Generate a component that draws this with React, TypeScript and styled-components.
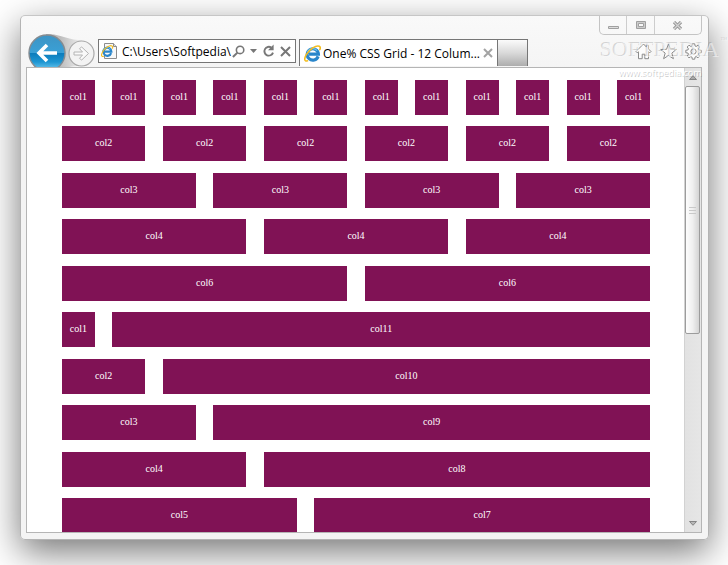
import React from "react";
import styled, { createGlobalStyle } from "styled-components";

const GlobalStyle = createGlobalStyle`
  * { box-sizing: border-box; }
  body { margin: 0; background: #fff; font-family: "Open Sans", "Noto Sans", sans-serif; font-size: 12px; color: #000; }
  button { border: 0; padding: 0; background: none; font: inherit; display: flex; align-items: center; justify-content: center; }
  svg { display: block; flex: none; }
`;

const Desktop = styled.div`
  position: relative;
  height: 100vh;
  padding: 15px 19px 25px 20px;
  overflow: hidden;
  display: flex;
`;

const Window = styled.div`
  flex: 1;
  min-width: 0;
  display: flex;
  flex-direction: column;
  padding: 0 6px 6px 5px;
  border: 1px solid #b4b4b4;
  border-top-color: #c6c6c6;
  border-radius: 5px;
  background: linear-gradient(#f9f9f9, #f4f4f4 60px);
  box-shadow: 0 12px 36px rgba(0, 0, 0, 0.54);
`;

const Toolbar = styled.header`
  display: flex;
  align-items: flex-start;
  height: 51px;
  overflow: hidden;
`;

const Nav = styled.nav`
  position: relative;
  flex: none;
  display: flex;
  align-items: center;
  gap: 2px;
  width: 72px;
  margin-top: 18px;
  padding-left: 2px;
`;

const Swoosh = styled.svg`
  position: absolute;
  left: 0;
  top: 0;
`;

const RoundButton = styled.button`
  position: relative;
`;

const AddressBar = styled.form`
  flex: 0 1 198px;
  min-width: 0;
  height: 24px;
  margin: 23px 3px 0 0;
  padding: 0 4px 0 2px;
  display: flex;
  align-items: center;
  border: 1px solid #767676;
  background: #fff;
`;

const AddressInput = styled.input`
  flex: 1;
  min-width: 0;
  height: 20px;
  margin-left: 4px;
  padding: 0;
  border: 0;
  outline: 0;
  background: transparent;
  color: #000;
  font: 12px "Open Sans", "Noto Sans", sans-serif;
`;

const AddressTools = styled.div`
  display: flex;
  align-items: center;
  gap: 5px;
`;

const Tabs = styled.div`
  flex: 0 1 229px;
  min-width: 0;
  display: flex;
  height: 27px;
  margin-top: 23px;
`;

const Tab = styled.div`
  flex: 1;
  min-width: 0;
  display: flex;
  align-items: center;
  gap: 2px;
  padding: 0 4px;
  border: 1px solid #767676;
  border-bottom: 0;
  background: #fff;
`;

const TabTitle = styled.span`
  flex: 1;
  white-space: nowrap;
`;

const NewTab = styled.button`
  && {
    width: 30px;
    border: 1px solid #767676;
    border-left: 0;
    border-bottom: 0;
    background: linear-gradient(#fbfbfb, #d9d9d9 50%, #adadad);
  }
`;

const WindowTools = styled.div`
  flex: none;
  width: 103px;
  margin-left: auto;
`;

const Caption = styled.div`
  display: flex;
  height: 19px;
  border: 1px solid #c4c4c4;
  border-top: 0;
  border-radius: 0 0 5px 5px;
`;

const CaptionButton = styled.button<{ $wide?: boolean }>`
  flex: ${(p) => (p.$wide ? 47 : 27)};
  & + & { border-left: 1px solid #cdcdcd; }
`;

const Commands = styled.div`
  display: flex;
  justify-content: flex-end;
  gap: 8px;
  margin-top: 8px;
`;

const Viewport = styled.div`
  flex: 1;
  min-height: 0;
  display: flex;
  border: 1px solid #b5b5b5;
  background: #fff;
`;

const Page = styled.main`
  flex: 1;
  min-width: 0;
  padding: 12px 34px 0 35px;
  overflow: hidden;
  font-family: "Liberation Serif", serif;
  font-size: 10px;
`;

const Row = styled.div`
  display: grid;
  grid-template-columns: repeat(12, minmax(0, 1fr));
  column-gap: 3%;
  margin-bottom: 1.95%;
`;

const Col = styled.div<{ $span: number }>`
  grid-column: span ${(p) => p.$span};
  padding-bottom: 2px;
  background: #801255;
  color: #fff;
  line-height: 33px;
  text-align: center;
`;

const Scrollbar = styled.div`
  flex: none;
  width: 17px;
  display: flex;
  flex-direction: column;
  background: linear-gradient(90deg, #d2d2d2 1px, #e2e2e2 1px, #e6e6e6);
`;

const ScrollArrow = styled.button`
  flex: none;
  height: 18px;
`;

const Track = styled.div`
  flex: 1;
  min-height: 0;
`;

const Thumb = styled.div`
  height: 58%;
  margin: 0 1px;
  display: flex;
  align-items: center;
  justify-content: center;
  border: 1px solid #9c9c9c;
  border-radius: 2px;
  background: linear-gradient(90deg, #fdfdfd, #f0f0f0 50%, #d4d4d4);
`;

const Watermark = styled.div`
  position: absolute;
  top: 37px;
  right: 0;
  display: grid;
  grid-template-columns: auto auto;
  column-gap: 2px;
  pointer-events: none;
  color: rgba(250, 250, 250, 0.6);
  text-shadow: -1px -1px 0 rgba(120, 120, 120, 0.28);
  font: 22px/26px "Liberation Serif", serif;
  white-space: nowrap;
`;

const Trademark = styled.span`
  font-size: 7px;
  line-height: 8px;
`;

const WatermarkUrl = styled.span`
  margin-left: 18px;
  color: #fff;
  text-shadow: 1px 1px 0 rgba(120, 120, 120, 0.4);
  font: 9px/20px "Open Sans", sans-serif;
`;

const IeMark = () => (
  <>
    <path d="M13.3 10.7A5.3 5.3 0 1 1 13.6 8.6H4.7" fill="none" stroke="#2a86cb" strokeWidth="2.9" />
    <path d="M12.3 5.3A5.3 5.3 0 0 0 3.2 7" fill="none" stroke="#69c2ef" strokeWidth="1.2" />
    <path d="M3.2 14.9C.2 15.9-.1 12.8 2.3 8.9 5.2 4.2 11.4-.2 14.4 1.2c1.1.6 1.1 1.9.5 3.2" fill="none" stroke="#f3bd21" strokeWidth="1.5" strokeLinecap="round" />
  </>
);

const IeIcon = () => (
  <svg width="17" height="17" viewBox="0 0 16 16" aria-hidden="true"><IeMark /></svg>
);

const PageIcon = () => (
  <svg width="17" height="17" viewBox="0 0 17 17" aria-hidden="true">
    <path d="M3.5 .5h9l3 3v12h-12z" fill="#f8f8f8" stroke="#8d8d8d" />
    <path d="M12.5 .5v3h3" fill="#ddd" stroke="#8d8d8d" />
    <g transform="translate(0 2) scale(.76)"><IeMark /></g>
  </svg>
);

const rows: number[][] = [
  [1, 1, 1, 1, 1, 1, 1, 1, 1, 1, 1, 1],
  [2, 2, 2, 2, 2, 2],
  [3, 3, 3, 3],
  [4, 4, 4],
  [6, 6],
  [1, 11],
  [2, 10],
  [3, 9],
  [4, 8],
  [5, 7],
];

export default function App() {
  return (
    <Desktop>
      <GlobalStyle />
      <Window>
        <Toolbar>
          <Nav aria-label="History">
            <Swoosh width="72" height="38" aria-hidden="true">
              <defs>
                <linearGradient id="swoosh" x1="0" x2="1">
                  <stop offset="0.4" stopColor="#bdbdbd" />
                  <stop offset="1" stopColor="#f0f0f0" />
                </linearGradient>
              </defs>
              <path d="M20 0C37 0 39 6 56 6V32C46 32 41 32 37 38H20z" fill="url(#swoosh)" />
            </Swoosh>
            <RoundButton type="button" aria-label="Back">
              <svg width="38" height="38" viewBox="0 0 38 38">
                <defs>
                  <linearGradient id="back" x1="0" y1="0" x2="0" y2="1">
                    <stop offset="0" stopColor="#3d94c4" />
                    <stop offset="0.49" stopColor="#3aa0d6" />
                    <stop offset="0.5" stopColor="#0b7bbb" />
                    <stop offset="0.75" stopColor="#1e96d2" />
                    <stop offset="1" stopColor="#7dd2f5" />
                  </linearGradient>
                </defs>
                <circle cx="19" cy="19" r="18" fill="url(#back)" stroke="#858b90" strokeWidth="1.4" />
                <path d="M29 19H11M19 11l-8 8 8 8" fill="none" stroke="#fff" strokeWidth="3.6" />
              </svg>
            </RoundButton>
            <RoundButton type="button" aria-label="Forward">
              <svg width="27" height="27" viewBox="0 0 27 27">
                <circle cx="13.5" cy="13.5" r="12.5" fill="#f3f3f3" stroke="#a9a9a9" strokeWidth="1.2" />
                <path d="M6 12h8.5l-3-3.4L13.7 7l6.8 6.5-6.8 6.5-2.2-1.6 3-3.4H6z" fill="#fafafa" stroke="#b4b4b4" />
              </svg>
            </RoundButton>
          </Nav>

          <AddressBar onSubmit={(e) => e.preventDefault()}>
            <PageIcon />
            <AddressInput aria-label="Address" defaultValue="C:\Users\Softpedia\" />
            <AddressTools>
              <button type="button" aria-label="Search">
                <svg width="13" height="13" viewBox="0 0 14 14" fill="none" stroke="#777">
                  <circle cx="8.7" cy="5.3" r="4" strokeWidth="1.7" />
                  <path d="M5.8 8.2L1 13" strokeWidth="2.2" />
                </svg>
              </button>
              <button type="button" aria-label="Show address list">
                <svg width="7" height="4" viewBox="0 0 7 4"><path d="M0 0h7L3.5 4z" fill="#777" /></svg>
              </button>
              <button type="button" aria-label="Refresh">
                <svg width="13" height="14" viewBox="0 0 13 14">
                  <path d="M9.3 3.6A4.4 4.4 0 1 0 11 8.6" fill="none" stroke="#777" strokeWidth="1.9" />
                  <path d="M11.6 .6v5.6H6z" fill="#777" />
                </svg>
              </button>
              <button type="button" aria-label="Stop">
                <svg width="11" height="11" viewBox="0 0 11 11"><path d="M1 1l9 9M10 1l-9 9" stroke="#777" strokeWidth="2" /></svg>
              </button>
            </AddressTools>
          </AddressBar>

          <Tabs>
            <Tab>
              <IeIcon />
              <TabTitle>One% CSS Grid - 12 Colum...</TabTitle>
              <button type="button" aria-label="Close tab">
                <svg width="10" height="10" viewBox="0 0 10 10"><path d="M1 1l8 8M9 1L1 9" stroke="#a3a3a3" strokeWidth="2" /></svg>
              </button>
            </Tab>
            <NewTab type="button" aria-label="New tab" />
          </Tabs>

          <WindowTools>
            <Caption>
              <CaptionButton type="button" aria-label="Minimize">
                <svg width="11" height="12" viewBox="0 0 11 12"><path d="M.5 7.5h10v2H.5z" fill="#ddd" stroke="#a0a0a0" /></svg>
              </CaptionButton>
              <CaptionButton type="button" aria-label="Maximize">
                <svg width="10" height="8" viewBox="0 0 10 8">
                  <path d="M.5 .5h9v7h-9z" fill="#ccc" stroke="#a0a0a0" />
                  <path d="M2.5 2.5h5v3h-5z" fill="#f8f8f8" stroke="#a0a0a0" />
                </svg>
              </CaptionButton>
              <CaptionButton type="button" aria-label="Close" $wide>
                <svg width="11" height="9" viewBox="0 0 11 9">
                  <path d="M2 1l7 7M9 1L2 8" stroke="#999" strokeWidth="3.2" />
                  <path d="M2 1l7 7M9 1L2 8" stroke="#d4d4d4" strokeWidth="1.2" />
                </svg>
              </CaptionButton>
            </Caption>
            <Commands>
              <button type="button" aria-label="Home">
                <svg width="17" height="17" viewBox="0 0 17 17" fill="#fcfcfc" stroke="#8a8a8a">
                  <path d="M8.5 1L1 8.5l1.2 1.3 1.3-1.2v7.1h3.7v-4.5h2.6v4.5h3.7V8.6l1.3 1.2L16 8.5l-2.5-2.5V2.3h-2v1.8z" />
                </svg>
              </button>
              <button type="button" aria-label="Favorites">
                <svg width="17" height="17" viewBox="0 0 17 17" fill="#fcfcfc" stroke="#8a8a8a">
                  <path d="M8.5 .9l2 5.4 5.8.2-4.5 3.6 1.6 5.6-4.9-3.2-4.9 3.2 1.6-5.6L.7 6.5l5.8-.2z" />
                </svg>
              </button>
              <button type="button" aria-label="Tools">
                <svg width="17" height="17" viewBox="0 0 17 17" fill="#fcfcfc" stroke="#8a8a8a">
                  <path d="M7.3 .8h2.4l.4 2.2 1 .5 1.9-1.3 1.8 1.8-1.3 1.9.5 1 2.2.4v2.4l-2.2.4-.5 1 1.3 1.9-1.8 1.8-1.9-1.3-1 .5-.4 2.2H7.3L6.9 14l-1-.5L4 14.8 2.2 13l1.3-1.9-.5-1-2.2-.4V7.3L3 6.9l.5-1L2.2 4 4 2.2l1.9 1.3 1-.5z" />
                  <circle cx="8.5" cy="8.5" r="2.6" />
                </svg>
              </button>
            </Commands>
          </WindowTools>
        </Toolbar>

        <Viewport>
          <Page>
            {rows.map((row, i) => (
              <Row key={i}>
                {row.map((span, j) => (
                  <Col key={j} $span={span}>col{span}</Col>
                ))}
              </Row>
            ))}
          </Page>
          <Scrollbar>
            <ScrollArrow type="button" aria-label="Scroll up">
              <svg width="8" height="5" viewBox="0 0 8 5"><path d="M.5 4.5L4 .7l3.5 3.8z" fill="#a8a8a8" stroke="#858585" /></svg>
            </ScrollArrow>
            <Track>
              <Thumb>
                <svg width="7" height="7" viewBox="0 0 7 7"><path d="M0 .5h7M0 3.5h7M0 6.5h7" stroke="#c9c9c9" /></svg>
              </Thumb>
            </Track>
            <ScrollArrow type="button" aria-label="Scroll down">
              <svg width="8" height="5" viewBox="0 0 8 5"><path d="M.5 .5L4 4.3 7.5 .5z" fill="#b8b8b8" stroke="#858585" /></svg>
            </ScrollArrow>
          </Scrollbar>
        </Viewport>
      </Window>

      <Watermark aria-hidden="true">
        <span>SOFTPEDIA</span>
        <Trademark>™</Trademark>
        <WatermarkUrl>www.softpedia.com</WatermarkUrl>
      </Watermark>
    </Desktop>
  );
}
